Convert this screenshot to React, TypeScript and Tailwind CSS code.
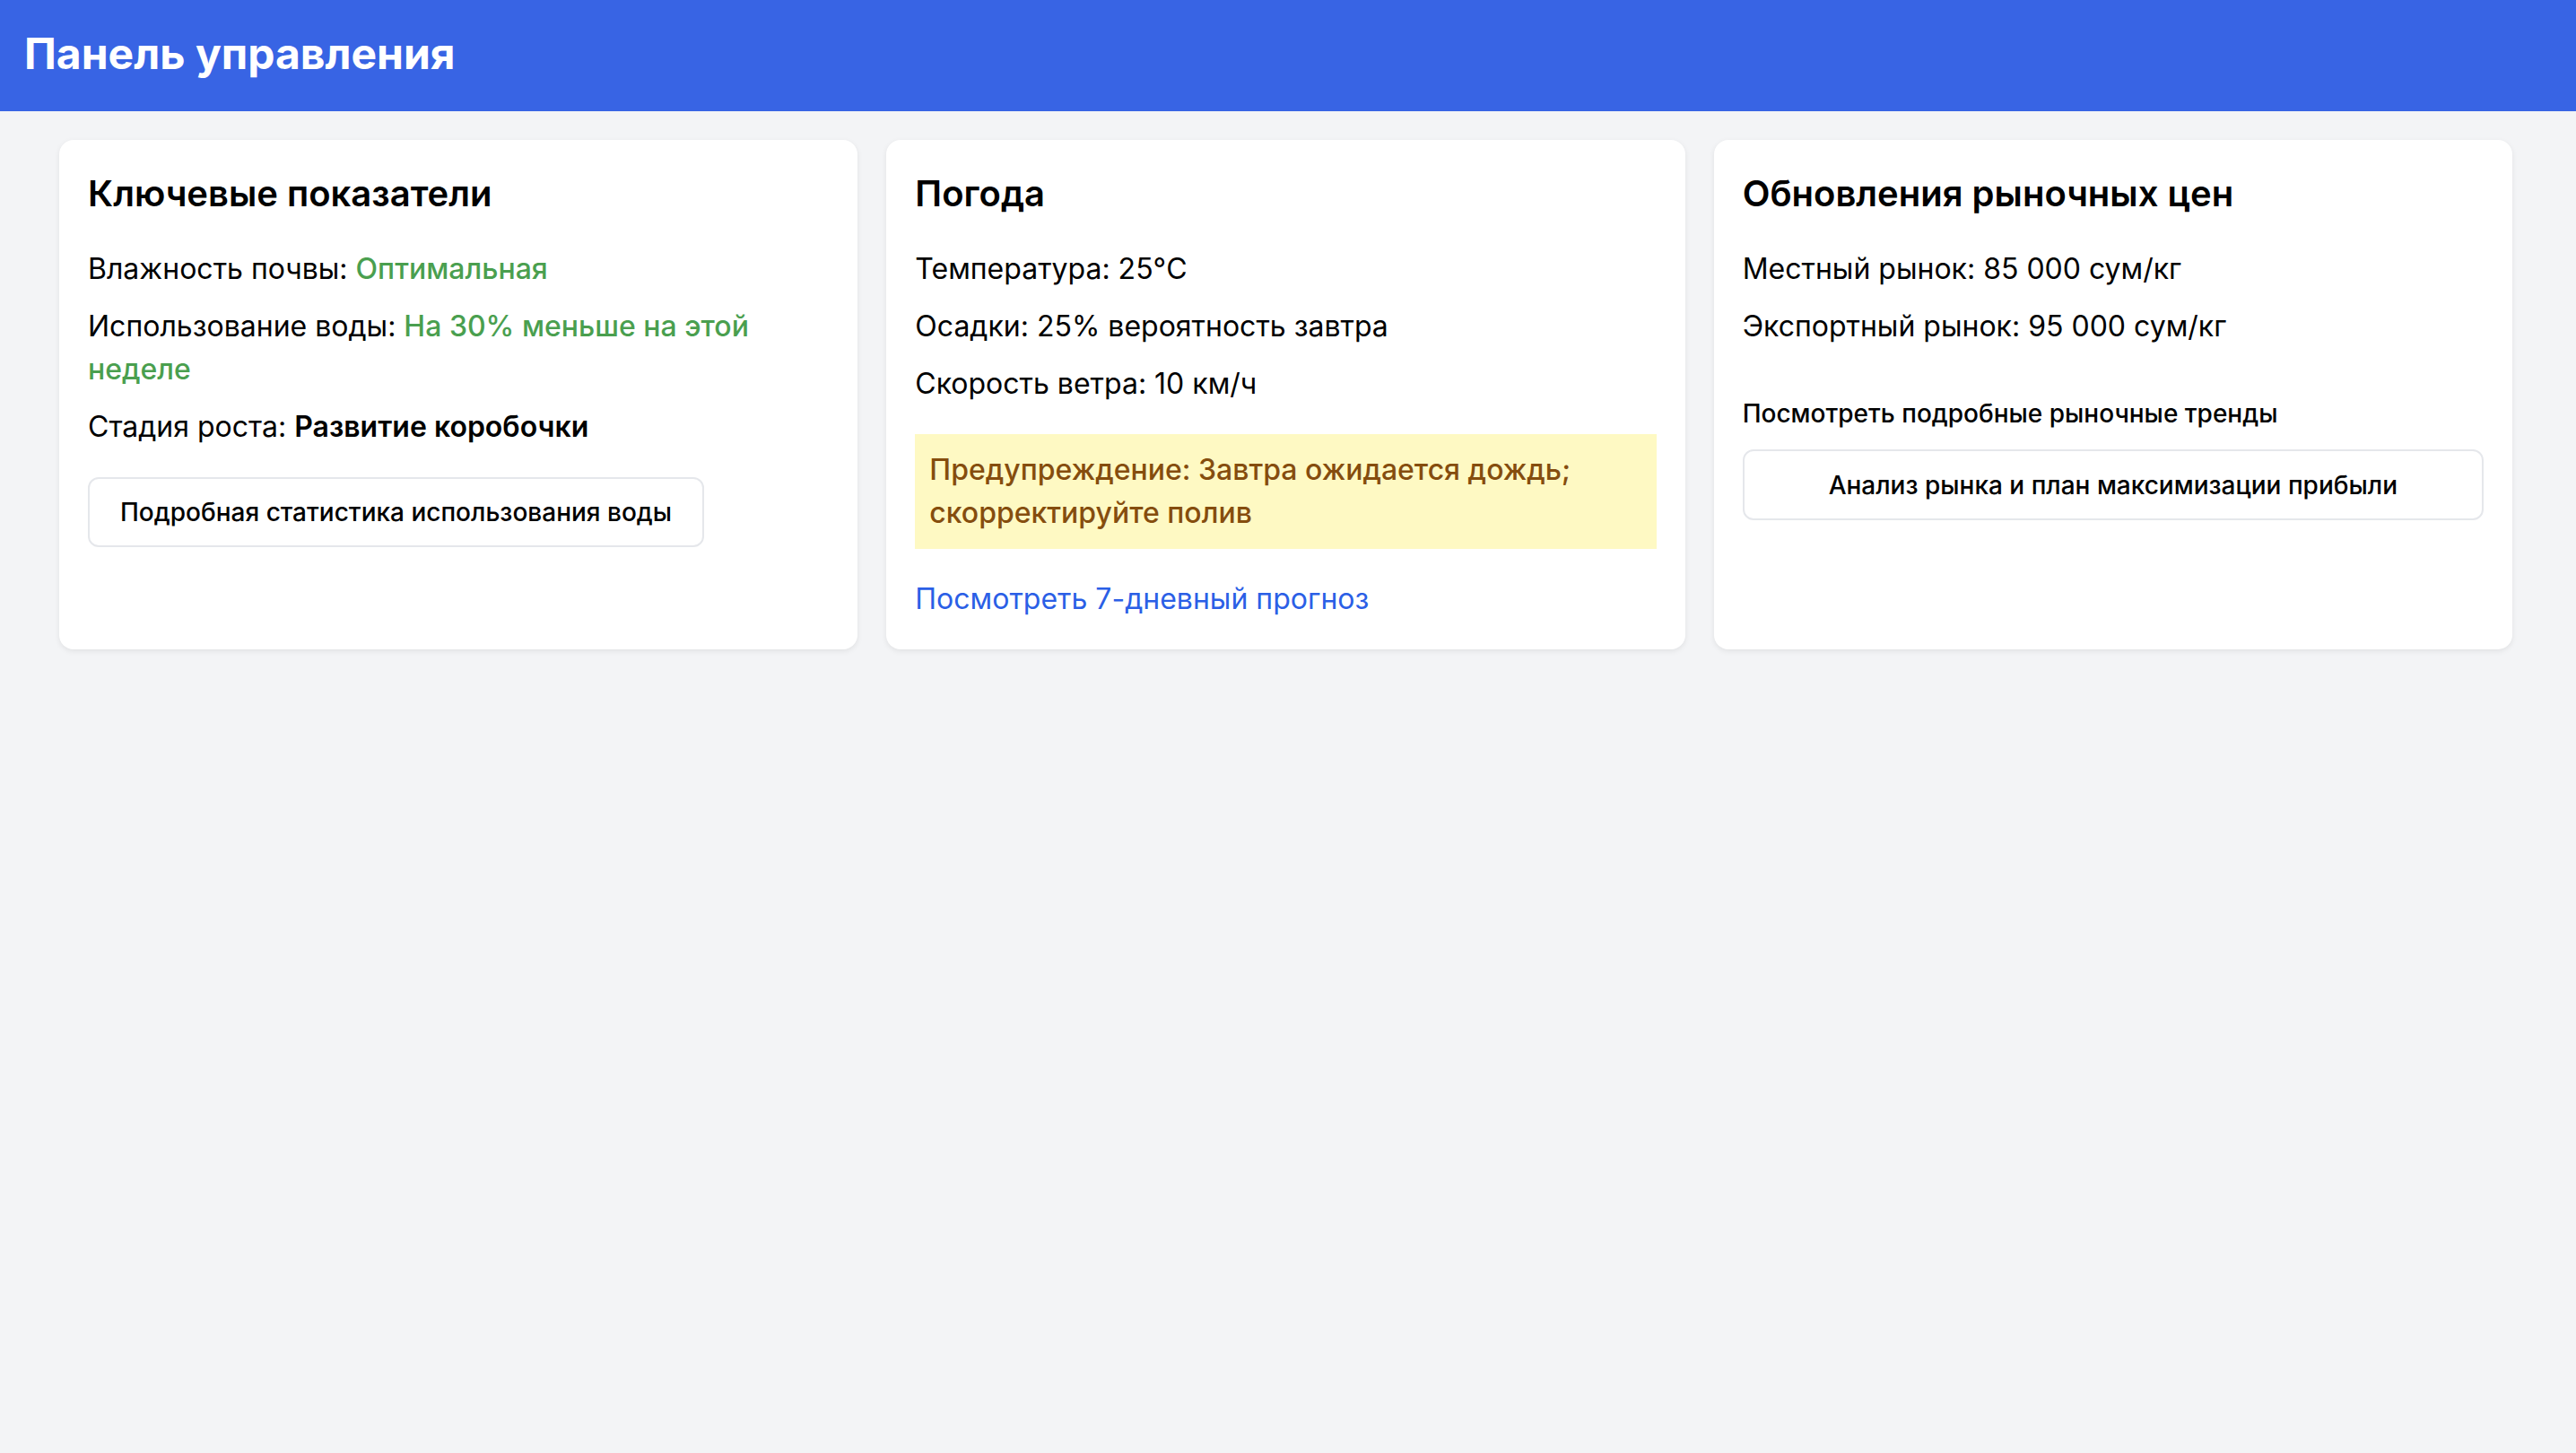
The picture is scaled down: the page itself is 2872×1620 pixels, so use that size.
import React from "react";

export default function App() {
  return (
    <div className="min-h-[1620px] bg-[#f3f4f6] font-['Inter','Noto_Sans',sans-serif] text-black">
      <header className="h-[124px] bg-[#3864e4] px-[27px] pt-[28px]">
        <h1 className="text-[48px] leading-[64px] font-bold text-white">Панель управления</h1>
      </header>
      <main className="pl-[66px] pr-[71px] pt-[32px]">
        <div className="grid grid-cols-3 gap-[32px]">
          <section className="bg-white rounded-[16px] p-[32px] shadow-[0_2px_6px_rgba(0,0,0,0.08)]">
            <h2 className="text-[40px] leading-[56px] font-semibold mb-[32px]">Ключевые показатели</h2>
            <p className="text-[32px] leading-[48px] mb-[16px]">
              Влажность почвы: <span className="text-[#4a9f4f] font-medium">Оптимальная</span>
            </p>
            <p className="text-[32px] leading-[48px] mb-[16px]">
              Использование воды: <span className="text-[#4a9f4f] font-medium">На 30% меньше на этой неделе</span>
            </p>
            <p className="text-[32px] leading-[48px]">
              Стадия роста: <span className="font-semibold">Развитие коробочки</span>
            </p>
            <button className="block mt-[32px] h-[78px] px-[34px] border-2 border-[#e5e7eb] rounded-[12px] bg-white text-[28px] font-medium text-black">
              Подробная статистика использования воды
            </button>
          </section>
          <section className="bg-white rounded-[16px] p-[32px] shadow-[0_2px_6px_rgba(0,0,0,0.08)]">
            <h2 className="text-[40px] leading-[56px] font-semibold mb-[32px]">Погода</h2>
            <p className="text-[32px] leading-[48px] mb-[16px]">Температура: 25°C</p>
            <p className="text-[32px] leading-[48px] mb-[16px]">Осадки: 25% вероятность завтра</p>
            <p className="text-[32px] leading-[48px]">Скорость ветра: 10 км/ч</p>
            <div className="mt-[32px] bg-[#fef9c3] p-[16px]">
              <p className="text-[32px] leading-[48px] font-medium text-[#854d0e]">
                Предупреждение: Завтра ожидается дождь; скорректируйте полив
              </p>
            </div>
            <a href="#" className="block mt-[32px] text-[32px] leading-[48px] text-[#2b5fe6]">
              Посмотреть 7-дневный прогноз
            </a>
          </section>
          <section className="bg-white rounded-[16px] p-[32px] shadow-[0_2px_6px_rgba(0,0,0,0.08)]">
            <h2 className="text-[40px] leading-[56px] font-semibold mb-[32px]">Обновления рыночных цен</h2>
            <p className="text-[32px] leading-[48px] mb-[16px]">Местный рынок: 85 000 сум/кг</p>
            <p className="text-[32px] leading-[48px]">Экспортный рынок: 95 000 сум/кг</p>
            <p className="mt-[53px] mb-[20px] text-[28px] leading-[40px] font-medium">Посмотреть подробные рыночные тренды</p>
            <button className="block w-full h-[79px] border-2 border-[#e5e7eb] rounded-[12px] bg-white text-[28px] font-medium text-black">
              Анализ рынка и план максимизации прибыли
            </button>
          </section>
        </div>
      </main>
    </div>
  );
}
